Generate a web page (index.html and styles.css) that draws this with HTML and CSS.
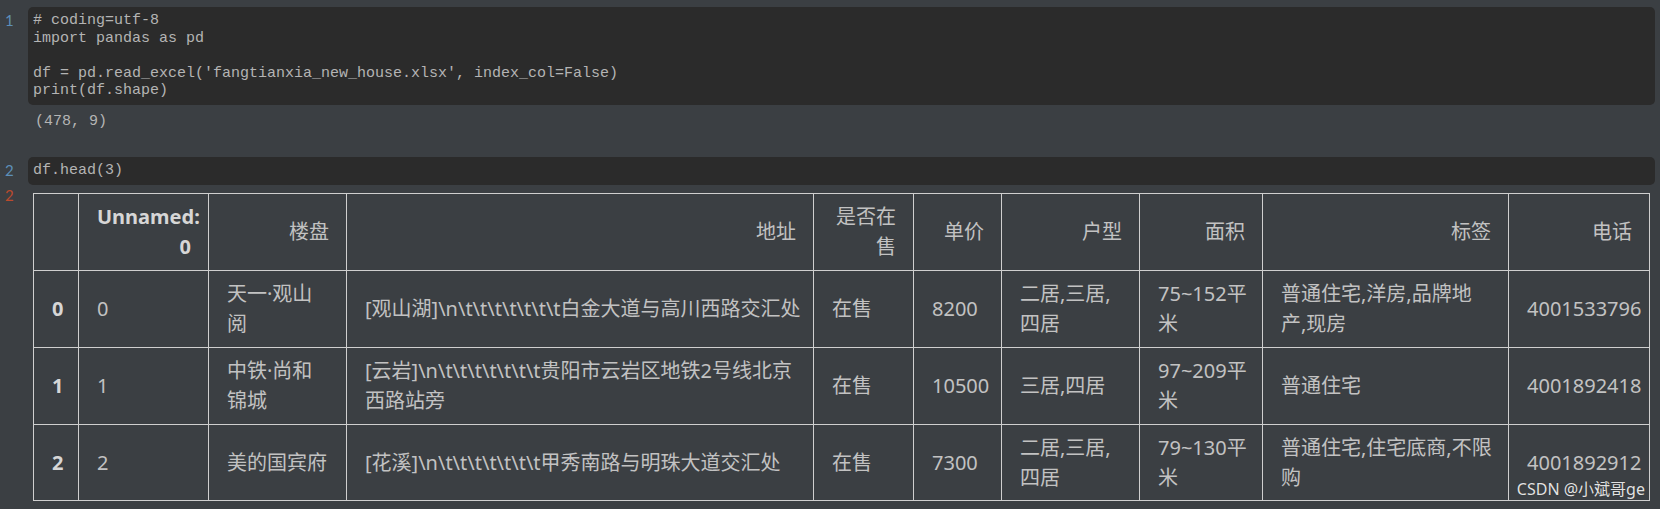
FILE: index.html
```html
<!DOCTYPE html>
<html lang="zh">
<head>
  <meta charset="UTF-8">
  <title>fangtianxia_new_house</title>
  <link rel="stylesheet" href="styles.css">
</head>
<body>
  <div class="notebook">
    <div class="cell">
      <div class="prompt in">1</div>
      <pre class="input"># coding=utf-8
import pandas as pd

df = pd.read_excel('fangtianxia_new_house.xlsx', index_col=False)
print(df.shape)</pre>
    </div>
    <div class="cell">
      <div class="prompt"></div>
      <pre class="output-text">(478, 9)</pre>
    </div>

    <div class="cell cell-next">
      <div class="prompt in">2</div>
      <pre class="input">df.head(3)</pre>
    </div>
    <div class="cell">
      <div class="prompt out">2</div>
      <table class="dataframe">
        <colgroup>
          <col style="width: 45px">
          <col style="width: 130px">
          <col style="width: 138px">
          <col style="width: 467px">
          <col style="width: 100px">
          <col style="width: 88px">
          <col style="width: 138px">
          <col style="width: 123px">
          <col style="width: 246px">
          <col style="width: 141px">
        </colgroup>
        <thead>
          <tr>
            <th></th>
            <th class="bold">Unnamed: 0</th>
            <th>楼盘</th>
            <th>地址</th>
            <th>是否在售</th>
            <th>单价</th>
            <th>户型</th>
            <th>面积</th>
            <th>标签</th>
            <th>电话</th>
          </tr>
        </thead>
        <tbody>
          <tr>
            <th>0</th>
            <td>0</td>
            <td>天一·观山阅</td>
            <td class="addr">[观山湖]\n\t\t\t\t\t\t\t白金大道与高川西路交汇处</td>
            <td>在售</td>
            <td>8200</td>
            <td>二居,三居,四居</td>
            <td class="area">75~152平米</td>
            <td>普通住宅,洋房,品牌地产,现房</td>
            <td>4001533796</td>
          </tr>
          <tr>
            <th>1</th>
            <td>1</td>
            <td>中铁·尚和锦城</td>
            <td class="addr">[云岩]\n\t\t\t\t\t\t\t贵阳市云岩区地铁2号线北京西路站旁</td>
            <td>在售</td>
            <td>10500</td>
            <td>三居,四居</td>
            <td class="area">97~209平米</td>
            <td>普通住宅</td>
            <td>4001892418</td>
          </tr>
          <tr>
            <th>2</th>
            <td>2</td>
            <td>美的国宾府</td>
            <td class="addr">[花溪]\n\t\t\t\t\t\t\t甲秀南路与明珠大道交汇处</td>
            <td>在售</td>
            <td>7300</td>
            <td>二居,三居,四居</td>
            <td class="area">79~130平米</td>
            <td>普通住宅,住宅底商,不限购</td>
            <td>4001892912</td>
          </tr>
        </tbody>
      </table>
    </div>
  </div>
  <div class="watermark">CSDN @小斌哥ge</div>
</body>
</html>
```

FILE: styles.css
```css
:root {
  --page-bg: #3b3f43;
  --code-bg: #2b2b2b;
  --code-text: #b4b4b4;
  --text: #c2c2c2;
  --text-strong: #d6d6d6;
  --grid: #cfcfcf;
  --prompt-in: #5d8fb9;
  --prompt-out: #bb4a2d;

  --font-sans: 'Noto Sans', 'Noto Sans CJK SC', sans-serif;
  --font-mono: 'Liberation Mono', 'DejaVu Sans Mono', monospace;
}

* {
  box-sizing: border-box;
}

body {
  position: relative;
  width: 1660px;
  height: 509px;
  margin: 0;
  overflow: hidden;
  background-color: var(--page-bg);
  font-family: var(--font-sans);
  color: var(--text);
}

.notebook {
  padding: 7px 5px 0 0;
}

.cell {
  display: flex;
  align-items: flex-start;
}

.cell-next {
  margin-top: 26px;
}

.prompt {
  width: 28px;
  flex-shrink: 0;
  padding: 5px 0 0 5px;
  font-family: 'Lato', var(--font-sans);
  font-size: 15px;
  line-height: 17.5px;
}

.prompt.in {
  color: var(--prompt-in);
}

.prompt.out {
  color: var(--prompt-out);
  padding-top: 2px;
}

.input {
  flex: 1;
  margin: 0;
  padding: 5px 5px 5.5px;
  background-color: var(--code-bg);
  border-radius: 5px;
  font-family: var(--font-mono);
  font-size: 15px;
  line-height: 17.5px;
  color: var(--code-text);
  white-space: pre;
}

.output-text {
  margin: 8px 0 0 7px;
  font-family: var(--font-mono);
  font-size: 15px;
  line-height: 17.5px;
  color: var(--code-text);
}

/* pandas dataframe */
.dataframe {
  width: 1616px;
  margin: 8px 0 0 5px;
  table-layout: fixed;
  border-collapse: collapse;
  border: 1px solid var(--grid);
  font-size: 20px;
  line-height: 30px;
}

.dataframe th,
.dataframe td {
  border: 1px solid var(--grid);
  padding: 8px 16px 8px 18px;
  vertical-align: middle;
}

.dataframe tbody tr:last-child th,
.dataframe tbody tr:last-child td {
  padding-bottom: 7px;
}

.dataframe thead th {
  text-align: right;
  font-weight: normal;
  padding-right: 17px;
}

.dataframe thead th.bold {
  font-weight: 700;
  color: var(--text-strong);
}

.dataframe tbody th {
  text-align: left;
  font-weight: 700;
  color: var(--text-strong);
}

.dataframe td {
  text-align: left;
}

.dataframe td.addr {
  padding-right: 8px;
}

.dataframe td.area {
  padding-right: 12px;
}

.watermark {
  position: absolute;
  right: 15px;
  bottom: 9px;
  font-family: var(--font-sans);
  font-size: 16px;
  line-height: 22px;
  color: #e2e2e2;
  text-shadow: 0 0 1px rgba(0, 0, 0, 0.4);
}
```
